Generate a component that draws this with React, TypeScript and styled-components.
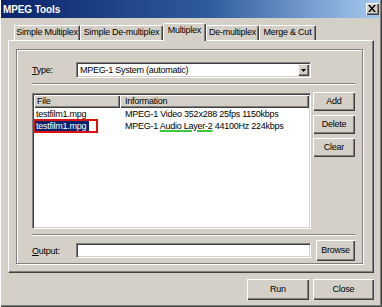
import React from "react";
import styled, { createGlobalStyle, css } from "styled-components";

const FACE = "#d4d0c8";
const SHADOW = "#808080";
const DARK = "#404040";
const LIGHT = "#ffffff";

const Global = createGlobalStyle`
  html, body { margin: 0; padding: 0; background: ${FACE}; }
  body {
    width: 382px; height: 307px; overflow: hidden;
    font-family: "Liberation Sans", Arial, sans-serif;
    font-size: 9px; letter-spacing: -0.25px; color: #000;
  }
  * { box-sizing: border-box; }
`;

const raised = css`
  background: ${FACE};
  box-shadow: inset 1px 1px 0 ${LIGHT}, inset -1px -1px 0 ${DARK}, inset -2px -2px 0 ${SHADOW};
`;

const sunken = css`
  border: 1px solid;
  border-color: ${SHADOW} ${LIGHT} ${LIGHT} ${SHADOW};
  box-shadow: inset 1px 1px 0 ${DARK}, inset -1px -1px 0 ${FACE};
  background: #fff;
`;

const Window = styled.div`
  width: 382px; height: 307px;
  background: ${FACE};
  display: flex; flex-direction: column;
  padding: 0 2px 2px 1px;
  box-shadow: inset 1px 0 0 ${LIGHT}, inset -1px -1px 0 ${DARK}, inset -2px -2px 0 ${SHADOW};
`;

const TitleBar = styled.div`
  flex: 0 0 18px; height: 18px;
  display: flex; align-items: center; justify-content: space-between;
  padding: 0 1px 0 2px;
  background: linear-gradient(to right, #0a246a 0%, #2f5c9e 55%, #a6caf0 100%);
`;

const TitleText = styled.span`
  color: #fff; font-weight: bold; font-size: 10px; letter-spacing: -0.1px;
`;

const CloseBtn = styled.div`
  width: 13px; height: 12px;
  ${raised};
  display: flex; align-items: center; justify-content: center;
  padding: 0 1px 1px 0;
`;

const Body = styled.div`
  flex: 1; display: flex; flex-direction: column;
  padding: 5px 6px 0 7px;
`;

const TabStrip = styled.div`
  display: flex; align-items: flex-end;
  height: 17px; padding-left: 6px;
  position: relative; z-index: 1;
`;

const Tab = styled.div<{ $w: number; $active?: boolean }>`
  width: ${(p) => p.$w}px;
  height: ${(p) => (p.$active ? 18 : 15)}px;
  margin-bottom: ${(p) => (p.$active ? -1 : 0)}px;
  background: ${FACE};
  border-left: 1px solid ${LIGHT};
  border-top: 1px solid ${LIGHT};
  border-right: 1px solid ${DARK};
  border-radius: 2px 2px 0 0;
  box-shadow: inset -1px 0 0 ${SHADOW};
  display: flex; justify-content: center;
  padding-top: 1px; line-height: 11px;
  white-space: nowrap;
`;

const Panel = styled.div`
  flex: 0 0 233px; height: 233px;
  display: flex; flex-direction: column;
  border-left: 1px solid ${LIGHT};
  border-top: 1px solid ${LIGHT};
  border-right: 1px solid ${DARK};
  border-bottom: 1px solid ${DARK};
  box-shadow: inset -1px -1px 0 ${SHADOW};
  padding: 8px 10px 8px 7px;
`;

const GroupBox = styled.div`
  flex: 1;
  display: flex; flex-direction: column;
  border: 1px solid ${SHADOW};
  box-shadow: inset 1px 1px 0 ${LIGHT}, 1px 1px 0 ${LIGHT};
  padding: 12px 7px 2px 15px;
`;

const FieldRow = styled.div<{ $h: number; $top?: number }>`
  display: flex; align-items: center;
  height: ${(p) => p.$h}px;
  margin-top: ${(p) => p.$top ?? 0}px;
`;

const FieldLabel = styled.span`
  width: 44px; flex: 0 0 44px;
`;

const Combo = styled.div`
  ${sunken};
  width: 235px; height: 16px;
  display: flex; align-items: center; justify-content: space-between;
  padding: 1px 1px 1px 3px;
`;

const DropBtn = styled.div`
  width: 11px; height: 12px;
  ${raised};
  display: flex; align-items: center; justify-content: center;
`;

const TextBox = styled.div`
  ${sunken};
  width: 235px; height: 15px;
`;

const Etched = styled.div<{ $top: number }>`
  height: 2px; flex: 0 0 2px;
  margin-top: ${(p) => p.$top}px;
  border-top: 1px solid ${SHADOW};
  border-bottom: 1px solid ${LIGHT};
`;

const ListArea = styled.div`
  display: flex; gap: 2px;
  height: 137px; margin-top: 7px;
`;

const ListView = styled.div`
  ${sunken};
  width: 279px; height: 136px; margin-top: 1px;
  padding: 1px;
  display: flex; flex-direction: column;
`;

const HeaderRow = styled.div`
  display: grid; grid-template-columns: 86px 1fr;
  height: 13px;
`;

const HeaderCell = styled.div<{ $pad: number }>`
  ${raised};
  padding-left: ${(p) => p.$pad}px;
  line-height: 12px;
`;

const Row = styled.div`
  display: grid; grid-template-columns: 86px 1fr;
  height: 12px; line-height: 12px;
  white-space: nowrap;
`;

const FileCell = styled.div`
  position: relative;
`;

const FileLabel = styled.span<{ $selected?: boolean }>`
  display: inline-block;
  padding: 0 3px 0 2px;
  background: ${(p) => (p.$selected ? "#0a246a" : "transparent")};
  color: ${(p) => (p.$selected ? "#fff" : "#000")};
`;

const RedMark = styled.div`
  position: absolute; left: -1px; top: -1px;
  width: 65px; height: 14px;
  border: 2px solid #e01010;
`;

const InfoCell = styled.div`
  padding-left: 5px;
`;

const Marked = styled.span`
  text-decoration: underline;
  text-decoration-color: #3cc83c;
  text-decoration-thickness: 2px;
  text-underline-offset: 1px;
`;

const ButtonCol = styled.div`
  display: flex; flex-direction: column; gap: 4px;
`;

const Button = styled.div<{ $w: number; $h: number }>`
  ${raised};
  width: ${(p) => p.$w}px; height: ${(p) => p.$h}px;
  display: flex; align-items: center; justify-content: center;
  padding-bottom: 1px;
`;

const BrowseButton = styled(Button)`
  margin-left: 5px;
`;

const Footer = styled.div`
  display: flex; justify-content: flex-end; gap: 4px;
  margin-top: 6px;
`;

const tabs = [
  { label: "Simple Multiplex", w: 66 },
  { label: "Simple De-multiplex", w: 83 },
  { label: "Multiplex", w: 43, active: true },
  { label: "De-multiplex", w: 53 },
  { label: "Merge & Cut", w: 57 },
];

export default function App() {
  return (
    <>
      <Global />
      <Window>
        <TitleBar>
          <TitleText>MPEG Tools</TitleText>
          <CloseBtn>
            <svg width="8" height="7" viewBox="0 0 8 7">
              <path d="M0 0h2l2 2.4 2-2.4h2l-3 3.5 3 3.5h-2l-2-2.4-2 2.4h-2l3-3.5z" fill="#000" />
            </svg>
          </CloseBtn>
        </TitleBar>
        <Body>
          <TabStrip>
            {tabs.map((t) => (
              <Tab key={t.label} $w={t.w} $active={t.active}>
                {t.label}
              </Tab>
            ))}
          </TabStrip>
          <Panel>
            <GroupBox>
              <FieldRow $h={16}>
                <FieldLabel>
                  <u>T</u>ype:
                </FieldLabel>
                <Combo>
                  <span>MPEG-1 System (automatic)</span>
                  <DropBtn>
                    <svg width="5" height="3" viewBox="0 0 5 3">
                      <path d="M0 0h5l-2.5 3z" fill="#000" />
                    </svg>
                  </DropBtn>
                </Combo>
              </FieldRow>
              <Etched $top={5} />
              <ListArea>
                <ListView>
                  <HeaderRow>
                    <HeaderCell $pad={3}>File</HeaderCell>
                    <HeaderCell $pad={5}>Information</HeaderCell>
                  </HeaderRow>
                  <Row>
                    <FileCell>
                      <FileLabel>testfilm1.mpg</FileLabel>
                    </FileCell>
                    <InfoCell>MPEG-1 Video 352x288 25fps 1150kbps</InfoCell>
                  </Row>
                  <Row>
                    <FileCell>
                      <FileLabel $selected>testfilm1.mpg</FileLabel>
                      <RedMark />
                    </FileCell>
                    <InfoCell>
                      MPEG-1 <Marked>Audio Layer-2</Marked> 44100Hz 224kbps
                    </InfoCell>
                  </Row>
                </ListView>
                <ButtonCol>
                  <Button $w={42} $h={19}>Add</Button>
                  <Button $w={42} $h={19}>Delete</Button>
                  <Button $w={42} $h={19}>Clear</Button>
                </ButtonCol>
              </ListArea>
              <Etched $top={5} />
              <FieldRow $h={21} $top={4}>
                <FieldLabel>
                  <u>O</u>utput:
                </FieldLabel>
                <TextBox />
                <BrowseButton $w={39} $h={21}>Browse</BrowseButton>
              </FieldRow>
            </GroupBox>
          </Panel>
          <Footer>
            <Button $w={62} $h={21}>Run</Button>
            <Button $w={61} $h={21}>Close</Button>
          </Footer>
        </Body>
      </Window>
    </>
  );
}
